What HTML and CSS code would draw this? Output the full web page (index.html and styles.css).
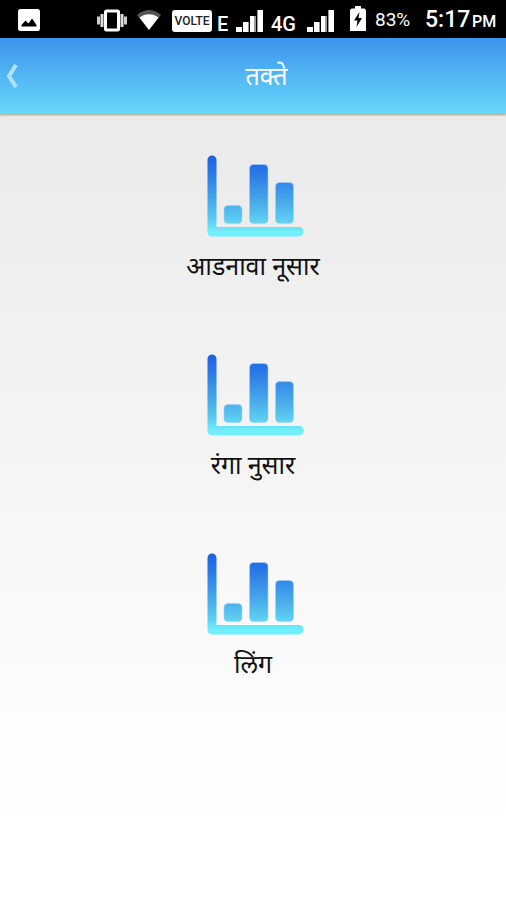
FILE: index.html
```html
<!DOCTYPE html>
<html lang="mr">
<head>
    <meta charset="UTF-8">
    <meta name="viewport" content="width=device-width, initial-scale=1.0">
    <title>तक्ते</title>
    <link rel="stylesheet" href="styles.css">
</head>
<body>
    <!-- Shared icons -->
    <svg class="defs" width="0" height="0">
        <defs>
            <linearGradient id="chart-fill" gradientUnits="userSpaceOnUse" x1="0" y1="0" x2="0" y2="82">
                <stop offset="0" stop-color="#1d5ee6"/>
                <stop offset="0.22" stop-color="#2b78e6"/>
                <stop offset="0.6" stop-color="#4aaeea"/>
                <stop offset="0.82" stop-color="#60d2f3"/>
                <stop offset="0.94" stop-color="#72effc"/>
                <stop offset="1" stop-color="#72effc"/>
            </linearGradient>
            <symbol id="chart" viewBox="0 0 97 82">
                <path fill="url(#chart-fill)" d="M0.5 5a4.5 4.5 0 0 1 9 0v67H92a4.7 4.7 0 0 1 0 9.500H5a4.500 4.500 0 0 1-4.500-4.500z"/>
                <g fill="url(#chart-fill)" stroke="#9fd0f3" stroke-width="0.6">
                    <rect x="17" y="50.500" width="18" height="18" rx="4"/>
                    <rect x="42.500" y="9.500" width="18.500" height="59" rx="4"/>
                    <rect x="68.500" y="27.500" width="18" height="41" rx="4"/>
                </g>
            </symbol>
            <symbol id="signal" viewBox="0 0 28 22">
                <path fill="#fff" d="M0 17h6v5H0zM7 12h6v10H7zM14 6h6v16h-6zM21 0h6v22h-6z"/>
                <path fill="#999" d="M12 12h1v10h-1zM18 6h2v16h-2zM21 0h1v22h-1z"/>
            </symbol>
        </defs>
    </svg>

    <div class="status-bar">
        <svg class="picture" width="22" height="22" viewBox="0 0 22 22">
            <rect width="22" height="22" rx="2.500" fill="#fff"/>
            <path d="M3.500 17.500v-1.500l4-4.500 3 3 3.500-5 4.500 6.500v1.500z" fill="#000"/>
        </svg>
        <svg class="vibrate" width="30" height="23" viewBox="0 0 30 23">
            <path d="M0 7.500h3v8H0zM27 7.500h3v8h-3z" fill="#ccc"/>
            <path d="M3.500 5h3v13h-3zM23.500 5h3v13h-3z" fill="#ddd"/>
            <rect x="7" y="0.500" width="16" height="22" rx="2.500" fill="#fff"/>
            <rect x="10" y="3.500" width="10" height="16" fill="#000"/>
        </svg>
        <svg class="wifi" width="24" height="20" viewBox="0 0 24 20">
            <path d="M12 20L0 5C7-1.700 17-1.700 24 5z" fill="#555"/>
            <path d="M12 20L2.500 7.500C8 3 16 3 21.500 7.500z" fill="#fff"/>
        </svg>
        <span class="volte">VOLTE</span>
        <span class="network edge">E</span>
        <svg class="signal-one" width="28" height="22"><use href="#signal"/></svg>
        <span class="network lte">4G</span>
        <svg class="signal-two" width="28" height="22"><use href="#signal"/></svg>
        <svg class="battery" width="16" height="25" viewBox="0 0 16 25">
            <path d="M5 0h6v2.500h3.500L16 4v21H0V4l1.500-1.500H5z" fill="#fff"/>
            <path d="M9.500 6L4 14.500h3.500L6.500 21 12 12H8.500z" fill="#000"/>
        </svg>
        <span class="percent">83%</span>
        <span class="time">5:17</span>
        <span class="period">PM</span>
    </div>

    <div class="header">
        <a href="#" class="back">
            <svg width="13" height="24" viewBox="0 0 13 24">
                <path d="M10 1L3 12l7 11" fill="none" stroke="#b5e2fb" stroke-width="4"/>
            </svg>
        </a>
        <h1>तक्ते</h1>
    </div>

    <div class="menu">
        <a href="#" class="menu-item">
            <svg width="97" height="82"><use href="#chart"/></svg>
            <span>आडनावा नूसार</span>
        </a>
        <a href="#" class="menu-item">
            <svg width="97" height="82"><use href="#chart"/></svg>
            <span>रंगा नुसार</span>
        </a>
        <a href="#" class="menu-item">
            <svg width="97" height="82"><use href="#chart"/></svg>
            <span>लिंग</span>
        </a>
    </div>
</body>
</html>
```
FILE: styles.css
```css
* {
    margin: 0;
    padding: 0;
    box-sizing: border-box;
}

body {
    display: flex;
    flex-direction: column;
    height: 100vh;
    overflow: hidden;
    font-family: Roboto, "Noto Sans", "Noto Sans Devanagari", sans-serif;
    background-color: #fff;
}

svg {
    display: block;
    flex-shrink: 0;
}

.defs {
    position: absolute;
}

/* Status bar */
.status-bar {
    display: flex;
    align-items: flex-start;
    height: 38px;
    background-color: #000;
    color: #fff;
    white-space: nowrap;
}

.status-bar span {
    flex-shrink: 0;
}

.picture {
    margin: 9px 0 0 18px;
}

.vibrate {
    margin: 9px 0 0 57px;
}

.wifi {
    margin: 10px 0 0 10px;
}

.volte {
    width: 40px;
    height: 22px;
    margin: 10px 0 0 11px;
    border-radius: 3px;
    background-color: #fff;
    color: #222;
    font-size: 12px;
    font-weight: 500;
    line-height: 22px;
    text-align: center;
}

.network {
    font-weight: 500;
    font-size: 20px;
    line-height: 24px;
}

.edge {
    width: 12px;
    margin: 12px 0 0 5px;
}

.signal-one {
    margin: 10px 0 0 7px;
}

.lte {
    width: 27px;
    margin: 12px 0 0 7px;
}

.signal-two {
    margin: 10px 0 0 9px;
}

.battery {
    margin: 6px 0 0 15px;
}

.percent {
    width: 38px;
    margin: 8px 0 0 9px;
    font-size: 19px;
    line-height: 24px;
}

.time {
    width: 45px;
    margin: 6px 0 0 12px;
    font-size: 23px;
    font-weight: 500;
    line-height: 28px;
}

.period {
    margin: 12px 0 0 2px;
    font-size: 16px;
    font-weight: 500;
    line-height: 20px;
}

/* Header */
.header {
    display: grid;
    grid-template-columns: 28px 1fr 1px;
    align-items: center;
    height: 76px;
    background: linear-gradient(#3c94ec, #68d8fb);
    color: #fff;
    box-shadow: 0 1px 2px rgba(0, 0, 0, 0.35);
    z-index: 1;
}

.back {
    padding-left: 6px;
}

.header h1 {
    padding-top: 2px;
    font-size: 25px;
    font-weight: normal;
    line-height: 36px;
    text-align: center;
}

/* Menu */
.menu {
    flex: 1;
    display: flex;
    flex-direction: column;
    align-items: center;
    padding-top: 41px;
    background: linear-gradient(#eaeaea, #fdfdfd 80%, #fff 94%);
}

.menu-item {
    display: flex;
    flex-direction: column;
    align-items: center;
    height: 199px;
    color: #111;
    text-decoration: none;
}

.menu-item svg {
    margin-left: 5px;
}

.menu-item span {
    margin-top: 12px;
    font-size: 25px;
    line-height: 36px;
}
```
